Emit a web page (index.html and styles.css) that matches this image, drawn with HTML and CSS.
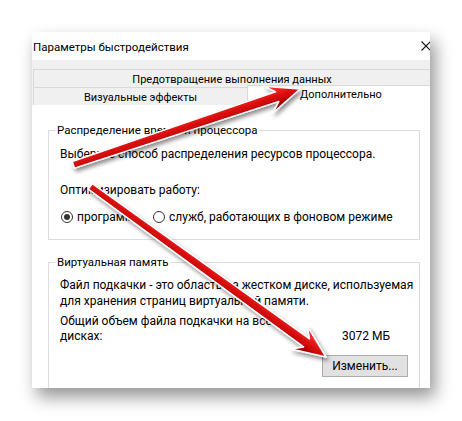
FILE: index.html
```html
<!DOCTYPE html>
<html lang="ru">
<head>
<meta charset="utf-8">
<title>Параметры быстродействия</title>
<link rel="stylesheet" href="styles.css">
</head>
<body>
<div class="window">
  <div class="titlebar">
    <span class="title">Параметры быстродействия</span>
    <svg class="close" width="10" height="10" viewBox="0 0 10 10"><path d="M0.5 0.5 L9.5 9.5 M9.5 0.5 L0.5 9.5" stroke="#111" stroke-width="1.1" fill="none"/></svg>
  </div>
  <div class="frame">
    <div class="tabrow row1"><div class="tab wide">Предотвращение выполнения данных</div></div>
    <div class="tabrow row2">
      <div class="tab vis">Визуальные эффекты</div>
      <div class="tab active">Дополнительно</div>
    </div>
    <div class="panel">
      <fieldset class="group g1">
        <legend>Распределение времени процессора</legend>
        <p class="line choose">Выберите способ распределения ресурсов процессора.</p>
        <p class="line optimize">Оптимизировать работу:</p>
        <div class="radios">
          <label class="radio first"><span class="circle checked"></span>программ</label>
          <label class="radio"><span class="circle"></span>служб, работающих в фоновом режиме</label>
        </div>
      </fieldset>
      <fieldset class="group g2">
        <legend>Виртуальная память</legend>
        <p class="line desc">Файл подкачки - это область на жестком диске, используемая для хранения страниц виртуальной памяти.</p>
        <div class="total">
          <span class="total-label">Общий объем файла подкачки на всех дисках:</span>
          <span class="total-value">3072 МБ</span>
        </div>
        <div class="actions"><button class="btn">Изменить...</button></div>
      </fieldset>
    </div>
  </div>
</div>
<svg class="arrows" width="462" height="421" viewBox="0 0 462 421">
  <defs>
    <linearGradient id="red" gradientUnits="userSpaceOnUse" x1="0" y1="-8" x2="0" y2="8">
      <stop offset="0" stop-color="#f22a2a"/>
      <stop offset="0.5" stop-color="#d80b0b"/>
      <stop offset="1" stop-color="#a80000"/>
    </linearGradient>
    <filter id="sh" x="-20%" y="-20%" width="140%" height="140%">
      <feDropShadow dx="2" dy="3" stdDeviation="2" flood-color="#000" flood-opacity="0.45"/>
    </filter>
  </defs>
  <g filter="url(#sh)">
    <polygon transform="translate(300 89) rotate(-18.5)" points="-239,-3.5 -24,-5 -33,-14 0,0 -33,14 -24,5 -239,3.5" fill="url(#red)" stroke="#fff" stroke-width="1.5" stroke-linejoin="round"/>
    <polygon transform="translate(326 357) rotate(35.9)" points="-291,-3.5 -24,-5 -33,-14 0,0 -33,14 -24,5 -291,3.5" fill="url(#red)" stroke="#fff" stroke-width="1.5" stroke-linejoin="round"/>
  </g>
</svg>
</body>
</html>
```
FILE: styles.css
```css
* { box-sizing: border-box; }
html, body { margin: 0; padding: 0; background: #fff; }
body {
  position: relative;
  width: 462px;
  height: 421px;
  overflow: hidden;
  font-family: Roboto, "Noto Sans", sans-serif;
  font-size: 12px;
  color: #000;
}
.window {
  margin: 32px 0 0 32px;
  width: 398px;
  height: 356px;
  overflow: hidden;
  background: #f0f0f0;
  box-shadow: 5px 9px 16px rgba(0,0,0,0.42);
  display: flex;
  flex-direction: column;
}
.titlebar {
  flex: 0 0 28px;
  height: 28px;
  background: #fff;
  display: flex;
  align-items: center;
  justify-content: space-between;
  padding-left: 1px;
  padding-top: 1px;
}
.title { line-height: 16px; font-size: 11.5px; }
.close { margin-right: -1px; margin-top: -1px; }
.frame {
  flex: 1;
  min-height: 0;
  display: flex;
  flex-direction: column;
  padding-top: 9px;
}
.tabrow { flex: 0 0 18px; height: 18px; display: flex; }
.tab {
  line-height: 17px;
  font-size: 11px;
  border-top: 1px solid #d9d9d9;
  border-left: 1px solid #d9d9d9;
  text-align: center;
  background: #f0f0f0;
}
.row1 { margin-left: 1px; }
.wide { flex: 1; padding-top: 1px; }
.vis { width: 214px; margin-left: 1px; padding-top: 1px; }
.active {
  flex: 1;
  background: #fff;
  margin-top: -2px;
  height: 20px;
  text-align: left;
  padding-left: 52px;
}
.panel {
  flex: 1;
  min-height: 0;
  overflow: hidden;
  background: #fff;
  padding: 17px 0 0 16px;
}
.group {
  margin: 0;
  width: 372px;
  border: 1px solid #dcdcdc;
  padding: 0 11px 0 11px;
  min-width: 0;
}
.group legend {
  padding: 0 2px;
  margin-left: -5px;
  line-height: 16px;
  font-size: 11.5px;
}
.line { margin: 0; line-height: 16px; }
.choose { margin-top: 8px; }
.optimize { margin-top: 20px; }
.radios {
  display: flex;
  align-items: center;
  margin-top: 11px;
  padding-bottom: 14px;
  line-height: 16px;
}
.radio { display: flex; align-items: center; }
.radio.first { width: 92px; }
.circle {
  width: 12px;
  height: 12px;
  border: 1px solid #333;
  border-radius: 50%;
  margin: 0 4px 0 1px;
  display: inline-flex;
  align-items: center;
  justify-content: center;
  background: #fff;
}
.circle.checked::after {
  content: "";
  width: 6px;
  height: 6px;
  border-radius: 50%;
  background: #333;
}
.g2 { margin-top: 14px; height: 150px; }
.desc { margin-top: 7px; width: 357px; }
.total {
  display: flex;
  justify-content: space-between;
  align-items: flex-end;
  margin-top: 5px;
  line-height: 15px;
  padding-right: 18px;
}
.total-label { width: 225px; }
.actions {
  display: flex;
  justify-content: flex-end;
  margin-top: 11px;
}
.btn {
  width: 86px;
  height: 22px;
  background: #e1e1e1;
  border: 1px solid #adadad;
  font-family: inherit;
  font-size: 12px;
  color: #000;
  padding: 0;
  margin: 0;
}
.arrows {
  position: absolute;
  left: 0;
  top: 0;
  pointer-events: none;
}
```
